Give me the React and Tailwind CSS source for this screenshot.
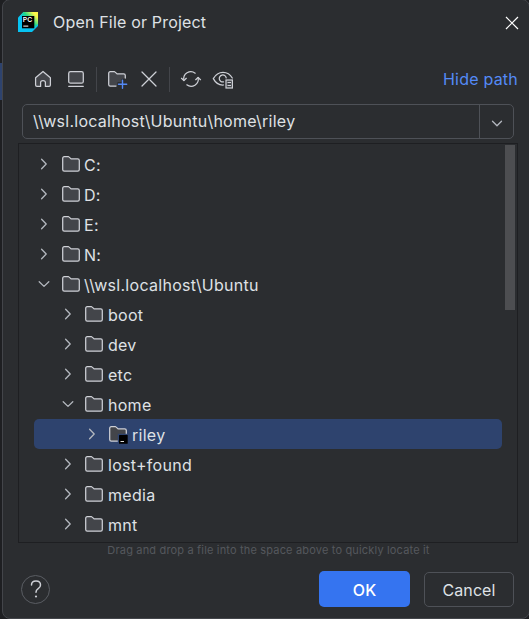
import React from "react";

const stroke = { stroke: "#ced0d6", strokeWidth: 1.25, strokeLinecap: "round", strokeLinejoin: "round" };

function Logo() {
  return (
    <svg width="20" height="20" viewBox="0 0 20 20" className="shrink-0">
      <defs>
        <linearGradient id="edge" x1="5" y1="15" x2="19" y2="2" gradientUnits="userSpaceOnUse">
          <stop offset="0.25" stopColor="#07c3f2" />
          <stop offset="0.55" stopColor="#21d789" />
          <stop offset="0.9" stopColor="#fcf84a" />
        </linearGradient>
      </defs>
      <path d="M0 5.5 5.5 0H20V14L14 20H0Z" fill="#07c3f2" />
      <path d="M5.5 0H20V12L16 16V4H2Z" fill="url(#edge)" />
      <rect x="4" y="4" width="12.3" height="12.3" fill="#000" />
      <text x="4.8" y="9.9" fontSize="6.8" fontWeight="600" fill="#fff" fontFamily="Inter, sans-serif">PC</text>
      <rect x="5.3" y="13.6" width="5" height="1" fill="#fff" />
    </svg>
  );
}

function Folder({ badge }) {
  return (
    <svg width="20" height="20" viewBox="0 0 20 20" fill="none" className="shrink-0">
      <path d="M1.7 4.3Q1.7 2.7 3.3 2.7H7.3Q7.8 2.7 8.2 3.1L10.1 4.9H16.7Q18.3 4.9 18.3 6.5V15.5Q18.3 17.1 16.7 17.1H3.3Q1.7 17.1 1.7 15.5Z" fill="#43454a" {...stroke} />
      {badge && <rect x="9.8" y="9.8" width="10.2" height="10.2" fill="#2e436e" />}
      {badge && <rect x="11" y="11" width="8.7" height="8.7" rx="0.5" fill="#000" />}
      {badge && <path d="M12.5 17.5H16" stroke="#ddd" strokeWidth="1" />}
    </svg>
  );
}

function Chevron({ open, large }) {
  return (
    <svg width="16" height="16" viewBox="0 0 16 16" fill="none" className="shrink-0">
      <path d={large ? "M3.5 6.3 8 10.7 12.5 6.3" : open ? "M3.2 5.8 8 10.4 12.8 5.8" : "M5.6 3.3 10.2 8 5.6 12.7"} stroke="#b4b8bf" strokeWidth="1.3" strokeLinecap="round" strokeLinejoin="round" />
    </svg>
  );
}

function Toolbar() {
  return (
    <div className="flex h-[26px] items-center">
      <svg width="20" height="20" viewBox="0 0 20 20" fill="none">
        <path d="M2.6 8.7 10 2.4 17.4 8.7V16Q17.4 17.4 16 17.4H12.4V13.6Q12.4 11.5 10 11.5T7.6 13.6V17.4H4Q2.6 17.4 2.6 16Z" fill="#43454a" {...stroke} />
      </svg>
      <svg width="20" height="20" viewBox="0 0 20 20" fill="none" className="ml-[13px]">
        <rect x="2.7" y="2.6" width="14.6" height="11.6" rx="1.8" fill="#43454a" {...stroke} />
        <path d="M2.7 17.3H17.3" {...stroke} />
      </svg>
      <div className="ml-[10px] h-[25px] w-px bg-[#43454a]" />
      <svg width="21" height="20" viewBox="0 0 21 20" fill="none" className="ml-[10px]">
        <path d="M10 17.1H3.3Q1.7 17.1 1.7 15.5V4.3Q1.7 2.7 3.3 2.7H7.3Q7.8 2.7 8.2 3.1L10.1 4.9H16.7Q18.3 4.9 18.3 6.5V9.2L14.5 10V13H10.5Z" fill="#43454a" />
        <path d="M9 17.1H3.3Q1.7 17.1 1.7 15.5V4.3Q1.7 2.7 3.3 2.7H7.3Q7.8 2.7 8.2 3.1L10.1 4.9H16.7Q18.3 4.9 18.3 6.5V9" {...stroke} />
        <path d="M15.5 11.3V19.2M11.5 15.3H19.7" stroke="#548af7" strokeWidth="1.4" strokeLinecap="round" />
      </svg>
      <svg width="20" height="20" viewBox="0 0 20 20" fill="none" className="ml-[11px]">
        <path d="M3 3 17 17M17 3 3 17" {...stroke} />
      </svg>
      <div className="ml-[10px] h-[25px] w-px bg-[#43454a]" />
      <svg width="22" height="20" viewBox="0 0 22 20" fill="none" className="ml-[10px]">
        <path d="M15.2 4.2A7.1 7.1 0 0 0 3.9 11.3M6.8 15.8A7.1 7.1 0 0 0 18.1 8.7" {...stroke} />
        <path d="M1.5 9.3 3.9 11.6 6.3 9.3M15.7 10.7 18.1 8.4 20.5 10.7" {...stroke} />
      </svg>
      <svg width="22" height="20" viewBox="0 0 22 20" fill="none" className="ml-[10px]">
        <path d="M11.5 16Q5 16.5 1.3 9.6 4.9 3.3 11 3.3T20.3 9" {...stroke} />
        <path d="M11.5 12.9A3.5 3.5 0 1 1 14.2 8.8" {...stroke} />
        <rect x="14" y="11" width="6.4" height="8" fill="#43454a" stroke="#ced0d6" strokeWidth="1.2" />
        <path d="M15.5 13.5H19M15.5 16.5H19" stroke="#ced0d6" strokeWidth="1" />
      </svg>
      <span className="ml-auto text-[16px] leading-[26px] tracking-[0.22px] text-[#548af7]">Hide path</span>
    </div>
  );
}

const entries = [
  ["C:", 0], ["D:", 0], ["E:", 0], ["N:", 0],
  ["\\\\wsl.localhost\\Ubuntu", 0, true],
  ["boot", 1], ["dev", 1], ["etc", 1], ["home", 1, true],
  ["riley", 2], ["lost+found", 1], ["media", 1], ["mnt", 1],
];
const indents = ["pl-[2px]", "pl-[26px]", "pl-[50px]"];

function Tree() {
  return (
    <div className="ml-[15px] mr-[11px] flex h-[400px] w-[500px] border border-[#1e1f22]">
      <div className="ml-[15px] w-[468px] pt-[5px]">
        {entries.map(([name, depth, open]) => (
          <div key={name} className={`flex h-[30px] items-center rounded-[5px] ${indents[depth]} ${name === "riley" ? "bg-[#2e436e]" : ""}`}>
            <Chevron open={open} />
            <div className={depth ? "ml-[8px] mr-px" : "ml-[9px]"}><Folder badge={name === "riley"} /></div>
            <span className="ml-[3px] mt-[2px] text-[16px] leading-5 tracking-[0.28px]">{name}</span>
          </div>
        ))}
      </div>
      <div className="ml-[3px] mt-px h-[165px] w-[10px] bg-[#4d4e51]" />
    </div>
  );
}

export default function App() {
  return (
    <div className="flex h-[619px] w-[529px] overflow-hidden bg-[#1e1f22] font-['Inter','Noto_Sans',sans-serif] text-[#dfe1e5]">
      <div className="mt-[63px] h-[37px] w-[2px] shrink-0 bg-[#2e436e]" />
      <div className="-mr-px flex h-[620px] w-[528px] shrink-0 flex-col rounded-[8px] border border-[#43454a] bg-[#2b2d30] -mt-px">
        <div className="flex h-[44px] shrink-0 items-center pl-[15px] pr-[10px]">
          <Logo />
          <h1 className="ml-[15px] text-[16px] font-normal leading-5 tracking-[0.18px]">Open File or Project</h1>
          <svg width="14" height="14" viewBox="0 0 14 14" className="ml-auto mt-[2px]">
            <path d="M1 1 13 13M13 1 1 13" stroke="#fff" strokeWidth="1.2" />
          </svg>
        </div>
        <div className="mt-[22px] shrink-0 pl-[30px] pr-[11px]"><Toolbar /></div>
        <div className="ml-[19px] mt-[12px] flex h-[35px] w-[492px] shrink-0 items-center rounded-[5px] border border-[#4e5157]">
          <span className="flex-1 pb-[2px] pl-[10px] text-[16px] leading-5 tracking-[0.26px]">{"\\\\wsl.localhost\\Ubuntu\\home\\riley"}</span>
          <div className="flex h-full w-[34px] items-center justify-center border-l border-[#4e5157] pt-[3px]"><Chevron large /></div>
        </div>
        <div className="mt-[4px] shrink-0"><Tree /></div>
        <p className="pl-[5px] text-center text-[11px] leading-[14px] tracking-[0.17px] text-[#55585d]">Drag and drop a file into the space above to quickly locate it</p>
        <div className="mt-[14px] flex items-center pl-[18px] pr-[15px]">
          <div className="flex size-[29px] items-center justify-center rounded-full border border-[#5a5d63]">
            <svg width="14" height="20" viewBox="0 0 14 20" fill="none">
              <path d="M2.5 6Q2.5 2 7 2T11.5 6Q11.5 8.2 9.2 9.7T7 13.2" stroke="#ced0d6" strokeWidth="1.5" strokeLinecap="round" />
              <circle cx="7" cy="17.5" r="1.1" fill="#ced0d6" />
            </svg>
          </div>
          <button className="ml-auto h-[36px] w-[91px] rounded-[5px] bg-[#3574f0] pt-[2px] text-[16px] font-medium text-white">OK</button>
          <button className="ml-[14px] h-[35px] w-[90px] rounded-[5px] border border-[#4e5157] pt-[2px] text-[16px] tracking-[0.1px]">Cancel</button>
        </div>
      </div>
    </div>
  );
}
